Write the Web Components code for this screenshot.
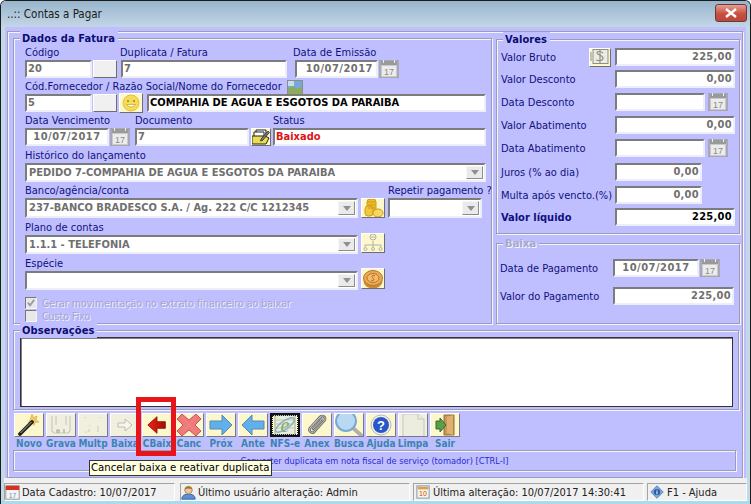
<!DOCTYPE html>
<html lang="pt-BR">
<head>
<meta charset="utf-8">
<title>Contas a Pagar</title>
<style>
  html, body { margin: 0; padding: 0; background: #fff; }
</style>
</head>
<body>
<cp-app></cp-app>
<script>
const CAL = `<svg viewBox="0 0 20 20" width="20" height="20"><rect x="1" y="1" width="18" height="18" fill="#c9c9c9" stroke="#8b8b8b"/><rect x="2" y="2" width="16" height="4" fill="#9a9a9a"/><rect x="4" y="1" width="1" height="3" fill="#eee"/><rect x="15" y="1" width="1" height="3" fill="#eee"/><rect x="3" y="7" width="14" height="10" fill="#ececec"/><text x="10" y="16" font-size="9" text-anchor="middle" fill="#8a8a8a" font-family="Liberation Sans">17</text></svg>`;

const ICONS = {
  cal: CAL,
  smile: `<svg viewBox="0 0 20 20" width="20" height="20"><circle cx="10" cy="10" r="8" fill="#f4dc5a" stroke="#e2c23a"/><circle cx="7" cy="8" r="1" fill="#a08020"/><circle cx="13" cy="8" r="1" fill="#a08020"/><path d="M5.5 11.5q4.500 5 9 0z" fill="#fff" stroke="#c8a020" stroke-width=".7"/></svg>`,
  pic: `<svg viewBox="0 0 16 15" width="16" height="15"><rect width="16" height="15" fill="#8c8c8c"/><rect x="1" y="1" width="14" height="13" fill="#78a8d8"/><rect x="1" y="1" width="6" height="5" fill="#c8dcec"/><path d="M1 14V9l5-3 4 3 5-2v7z" fill="#8cab5c"/></svg>`,
  docs: `<svg viewBox="0 0 20 18" width="20" height="18"><path d="M5 2h10v9H5z" fill="#fff" stroke="#222"/><path d="M3 4h10v9H3z" fill="#fff" stroke="#222"/><path d="M1 8h13l4 2-3 6H1z" fill="#e8dc50" stroke="#222"/><path d="M10 11l7-8 1.500 1.500-7 8-2 .5z" fill="#777" stroke="#111" stroke-width=".6"/></svg>`,
  coins: `<svg viewBox="0 0 22 22" width="22" height="22"><rect x="5" y="2" width="9" height="14" rx="3" fill="#eebc2c" stroke="#cd9a1a"/><rect x="3" y="9" width="8" height="10" rx="3" fill="#f2c838" stroke="#cd9a1a"/><ellipse cx="16" cy="16" rx="5" ry="4" fill="#f6d860" stroke="#cd9a1a"/><path d="M6 5h7M6 8h7M6 11h7" stroke="#cd9a1a"/></svg>`,
  org: `<svg viewBox="0 0 22 22" width="22" height="22" fill="none" stroke="#b0b0a8"><circle cx="11" cy="5" r="3"/><path d="M9 5h4M11 9v3M3 13h16M3 13v2M11 12v3M19 13v2"/><circle cx="3.500" cy="17" r="1.500"/><circle cx="11" cy="17" r="1.500"/><circle cx="18.500" cy="17" r="1.500"/></svg>`,
  coin: `<svg viewBox="0 0 22 22" width="22" height="22"><ellipse cx="11" cy="13" rx="9.500" ry="7.500" fill="#c98a30"/><ellipse cx="11" cy="10" rx="9.500" ry="7.500" fill="#eca854" stroke="#b87828"/><ellipse cx="11" cy="10" rx="6" ry="4.500" fill="#f2bc6c" stroke="#b87828"/><path d="M13 8c-2-1.500-4 0-2 2s0 3.500-2 2" stroke="#a06820" fill="none"/></svg>`,
  money: `<svg viewBox="0 0 22 18" width="22" height="18" fill="none" stroke="#8f8f88"><rect x="4" y="1.500" width="15" height="14" fill="#ecece2"/><path d="M14 5c-2-2-6-2-6 0s6 2 6 5-4 3-7 2M11 2v13" stroke-width="1.200"/><path d="M2 4v9" /></svg>`,
  novo: `<svg viewBox="0 0 24 24" width="24" height="24"><path d="M15 1l1.500 3.500L20 3l-1 4 3 2-4 .5-1 3-2-3-4 .5 2-3z" fill="#f0c868" stroke="#d8a848" stroke-width=".6"/><path d="M3 21L15 9" stroke="#222" stroke-width="3.800" stroke-linecap="round"/><path d="M3.500 20L14.500 9" stroke="#aaa" stroke-width="1"/></svg>`,
  grava: `<svg viewBox="0 0 26 24" width="26" height="24" fill="none" stroke="#c8c8c0" stroke-width="1.200"><path d="M4 3v15l2 2h14l2-2V3"/><path d="M8 3v9M18 3v9"/><path d="M9 20v-3h2v3M16 20v-4" stroke="#a8a8a0"/></svg>`,
  multp: `<svg viewBox="0 0 26 24" width="26" height="24" fill="none" stroke="#cfcfc8" stroke-width="1.200"><path d="M5 4v1M20 4v1M9 16v3M18 13v6M10 12v1M5 19h2"/></svg>`,
  baixa: `<svg viewBox="0 0 24 24" width="24" height="24"><path d="M5 10h7V6l7 6-7 6v-4H5z" fill="#f6f6ee" stroke="#bcbcb4"/></svg>`,
  cbaix: `<svg viewBox="0 0 24 24" width="20" height="20"><defs><linearGradient id="r" x1="0" x2="1"><stop offset="0" stop-color="#f02010"/><stop offset="1" stop-color="#a01008"/></linearGradient></defs><path d="M1 12L12 2v6h10v8H12v6z" fill="url(#r)" stroke="#8c1004"/></svg>`,
  canc: `<svg viewBox="0 0 26 24" width="26" height="24"><path d="M1 6l5-5 7 6 7-6 5 5-6 6 6 6-5 5-7-6-7 6-5-5 6-6z" fill="#ee7a7a" stroke="#c85858"/><path d="M6 4l14 16M20 4L6 20" stroke="#f4a0a0" stroke-dasharray="1 2"/></svg>`,
  prox: `<svg viewBox="0 0 26 24" width="26" height="24"><path d="M2 8h12V2l10 10-10 10v-6H2z" fill="#60b0ec" stroke="#5888b0"/></svg>`,
  ante: `<svg viewBox="0 0 26 24" width="26" height="24"><path d="M24 8H12V2L2 12l10 10v-6h12z" fill="#60b0ec" stroke="#5888b0"/></svg>`,
  nfse: `<svg viewBox="0 0 24 22" width="24" height="22"><rect x="2" y="1" width="20" height="20" fill="#e8ecdc" stroke="#98a890"/><path d="M3 6h18M3 10h18M3 14h18" stroke="#c0c8b0"/><ellipse cx="12" cy="11" rx="11" ry="4" transform="rotate(-35 12 11)" fill="none" stroke="#88b0c8" stroke-width="1.500"/><text x="12" y="18" font-size="20" font-style="italic" text-anchor="middle" fill="#80a870" font-family="Liberation Serif">e</text></svg>`,
  anex: `<svg viewBox="0 0 24 24" width="24" height="24" fill="none" stroke-linecap="round"><path d="M6 14L15 4c3-3 7 1 4 4l-10 11c-2 2-6-1-4-4l9-10c2-1 3 1 2 2l-8 9" stroke="#6e6e6e" stroke-width="2.600"/><path d="M6 14L15 4c3-3 7 1 4 4l-10 11c-2 2-6-1-4-4l9-10c2-1 3 1 2 2l-8 9" stroke="#c4c4c4" stroke-width="1"/></svg>`,
  busca: `<svg viewBox="0 0 30 28" width="30" height="28"><path d="M19 17l9 8" stroke="#b0b0b0" stroke-width="4" stroke-linecap="round"/><circle cx="12" cy="10" r="10" fill="#b8d8f4" stroke="#78a8d0" stroke-width="2"/></svg>`,
  ajuda: `<svg viewBox="0 0 24 24" width="24" height="24"><circle cx="12" cy="12" r="10" fill="#f0f0f0" stroke="#b8b8c0"/><circle cx="12" cy="12" r="8" fill="#2858c8"/><text x="12" y="16.500" font-size="13" font-weight="bold" text-anchor="middle" fill="#fff" font-family="Liberation Sans">?</text></svg>`,
  limpa: `<svg viewBox="0 0 26 26" width="26" height="26"><path d="M3 2h15v5h6v18H3z" fill="#ececdf" stroke="#c4c4bc"/><path d="M18 2l6 5" stroke="#d8d8d0"/></svg>`,
  sair: `<svg viewBox="0 0 24 24" width="24" height="24"><path d="M11 2h10v20H11z" fill="#c89858" stroke="#907038"/><path d="M14 4l6-2v20l-6-2z" fill="#e0b070"/><path d="M3 8h4V5l6 7-6 7v-3H3z" fill="#58a048" stroke="#386830"/></svg>`,
  stcal: `<svg viewBox="0 0 18 18" width="15" height="15"><rect x="1" y="1" width="16" height="16" fill="#f4f4f4" stroke="#888"/><rect x="1" y="1" width="16" height="5" fill="#d83020"/><text x="9" y="15" font-size="8" text-anchor="middle" fill="#7090b0" font-family="Liberation Sans">17</text></svg>`,
  stuser: `<svg viewBox="0 0 18 18" width="15" height="15"><path d="M1 17c0-5 4-6 8-6s8 1 8 6z" fill="#5b8fd8" stroke="#30589c"/><circle cx="9" cy="6" r="4.500" fill="#eec8a0" stroke="#a87840"/><path d="M4.500 5c1-4 8-4 9 0-3-1-6-1-9 0z" fill="#9c6c30"/></svg>`,
  stten: `<svg viewBox="0 0 16 16" width="14" height="14"><rect x="1" y="1" width="14" height="14" fill="#f8f4e0" stroke="#7090b0"/><rect x="2" y="2" width="12" height="3" fill="#d8a050"/><text x="8" y="13" font-size="8" text-anchor="middle" fill="#c05020" font-family="Liberation Sans">10</text></svg>`,
  stinfo: `<svg viewBox="0 0 18 18" width="14" height="14"><path d="M9 1l8 8-8 8-8-8z" fill="#7fa8d8" stroke="#4878b0"/><circle cx="9" cy="9" r="4" fill="#2858a8"/><path d="M9 6v1M9 8v4" stroke="#fff" stroke-width="1.400"/></svg>`
};

class CpIcon extends HTMLElement {
  constructor() { super(); this.attachShadow({mode: "open"}); }
  connectedCallback() {
    this.shadowRoot.innerHTML = `<style>:host{display:inline-flex;align-items:center;justify-content:center;line-height:0;flex:none}</style>${ICONS[this.getAttribute("name")] || ""}`;
  }
}

// sunken edit box, the delphi kind
class CpInput extends HTMLElement {
  constructor() { super(); this.attachShadow({mode: "open"}); }
  connectedCallback() {
    const tone = this.getAttribute("tone") || "off";
    const colors = {off: "#6f6f6f", on: "#000", red: "#dc1414"};
    this.shadowRoot.innerHTML = `
    <style>
      :host { display:block; box-sizing:border-box; height:18px; flex:none;
        background:#fff; border:2px solid; border-color:#7c7c7c #eeeef8 #eeeef8 #7c7c7c;
        font:bold 11px "DejaVu Sans Condensed","DejaVu Sans",sans-serif;
        color:${colors[tone]}; line-height:14px; padding:0 1px; white-space:nowrap; overflow:hidden; }
      :host([right]) { text-align:right; letter-spacing:.3px; }
      :host([center]) { text-align:center; letter-spacing:.5px; }
    </style><slot></slot>`;
  }
}

class CpSelect extends HTMLElement {
  constructor() { super(); this.attachShadow({mode: "open"}); }
  connectedCallback() {
    this.shadowRoot.innerHTML = `
    <style>
      :host { display:flex; box-sizing:border-box; height:20px; flex:none; align-items:stretch;
        background:#fff; border:2px solid; border-color:#7c7c7c #eeeef8 #eeeef8 #7c7c7c;
        font:bold 11px "DejaVu Sans Condensed","DejaVu Sans",sans-serif; color:#6f6f6f; }
      .v { flex:1; padding:1px 2px; line-height:14px; white-space:nowrap; overflow:hidden; }
      .b { width:15px; margin:1px; background:#eaeaea; border:1px solid; border-color:#f6f6f6 #8c8c8c #8c8c8c #f6f6f6;
        display:flex; align-items:center; justify-content:center; }
      .b::after { content:""; border:4px solid transparent; border-top:5px solid #909090; border-bottom:0; }
    </style><div class="v"><slot></slot></div><div class="b"></div>`;
  }
}

class CpIbtn extends HTMLElement {
  constructor() { super(); this.attachShadow({mode: "open"}); }
  connectedCallback() {
    const name = this.getAttribute("icon");
    this.shadowRoot.innerHTML = `
    <style>
      :host { display:flex; box-sizing:border-box; width:24px; height:18px; flex:none; align-items:center; justify-content:center;
        overflow:hidden; background:#f0f0f0; border:1px solid; border-color:#fff #6e6e6e #6e6e6e #fff; }
      :host([cream]) { background:#fdf8cc; }
      :host([flat]) { border:0; background:none; width:20px; }
    </style>${name ? `<cp-icon name="${name}"></cp-icon>` : ""}`;
  }
}

class CpField extends HTMLElement {
  constructor() { super(); this.attachShadow({mode: "open"}); }
  connectedCallback() {
    this.shadowRoot.innerHTML = `
    <style>
      :host { display:block; flex:none; }
      .l { height:14px; line-height:14px; white-space:nowrap; display:flex; align-items:center; }
      .c { display:flex; align-items:flex-start; gap:1px; }
    </style><div class="l">${this.getAttribute("label")}<slot name="tag"></slot></div><div class="c"><slot></slot></div>`;
  }
}

class CpGroup extends HTMLElement {
  constructor() { super(); this.attachShadow({mode: "open"}); }
  connectedCallback() {
    this.shadowRoot.innerHTML = `
    <style>
      :host { display:block; position:relative; box-sizing:border-box; border:1px solid #9c9cb4;
        box-shadow:inset 1px 1px 0 #f4f4ff, 1px 1px 0 #f4f4ff; }
      .leg { position:absolute; left:6px; top:-8px; padding:0 3px 0 2px; background:#bfbfff; line-height:15px;
        font-weight:bold; font-size:11px; letter-spacing:.1px; color:#0c0c70; }
      :host([off]) .leg { color:#a8a8c8; text-shadow:1px 1px 0 #f4f4ff; }
    </style><div class="leg">${this.getAttribute("legend")}</div><slot></slot>`;
  }
}

class CpCheck extends HTMLElement {
  constructor() { super(); this.attachShadow({mode: "open"}); }
  connectedCallback() {
    const on = this.hasAttribute("on");
    this.shadowRoot.innerHTML = `
    <style>
      :host { display:flex; align-items:center; gap:5px; height:13px; font-size:10.500px; color:#a6a6cc; text-shadow:1px 1px 0 #eeeeff; white-space:nowrap; }
      i { display:block; box-sizing:border-box; width:12px; height:12px; background:#e8e8e8; border:1px solid; border-color:#777 #f4f4f4 #f4f4f4 #777; }
      svg { display:block; }
    </style><i>${on ? `<svg viewBox="0 0 11 11" width="10" height="10"><path d="M2 5l2.500 3L9 2" fill="none" stroke="#9a9a9a" stroke-width="2"/></svg>` : ""}</i><slot></slot>`;
  }
}

class CpTool extends HTMLElement {
  constructor() { super(); this.attachShadow({mode: "open"}); }
  connectedCallback() {
    this.shadowRoot.innerHTML = `
    <style>
      :host { display:flex; flex-direction:column; align-items:center; width:30px; flex:none; }
      .b { box-sizing:border-box; width:30px; height:24px; display:flex; align-items:center; justify-content:center; overflow:hidden;
        background:#fdf8cc; border:1px solid; border-color:#fff #77778c #77778c #fff; }
      :host([off]) .b { background:#f1f0de; }
      :host([focus]) .b { border:2px solid #111; outline:1px dotted #222; outline-offset:-3px; }
      .t { margin-top:1px; height:12px; white-space:nowrap; font:bold 10px/12px "DejaVu Sans Condensed","DejaVu Sans",sans-serif; color:#3a84b0; }
    </style><div class="b"><cp-icon name="${this.getAttribute("icon")}"></cp-icon></div><div class="t">${this.getAttribute("label")}</div>`;
  }
}

class CpStat extends HTMLElement {
  constructor() { super(); this.attachShadow({mode: "open"}); }
  connectedCallback() {
    this.shadowRoot.innerHTML = `
    <style>
      :host { display:flex; box-sizing:border-box; align-items:center; gap:2px; height:18px; flex:none;
        border:1px solid; border-color:#a4a4a4 #fff #fff #a4a4a4; white-space:nowrap; overflow:hidden; }
    </style><cp-icon name="${this.getAttribute("icon")}"></cp-icon><slot></slot>`;
  }
}

class CpTip extends HTMLElement {
  constructor() { super(); this.attachShadow({mode: "open"}); }
  connectedCallback() {
    this.shadowRoot.innerHTML = `
    <style>
      :host { position:absolute; left:89px; top:460px; box-sizing:border-box; width:183px; height:16px; background:#ffffe1; border:1px solid #333;
        color:#000; font-size:11.300px; line-height:14px; padding-left:1px; white-space:nowrap; overflow:hidden; }
    </style><slot></slot>`;
  }
}

class CpApp extends HTMLElement {
  constructor() { super(); this.attachShadow({mode: "open"}); }
  connectedCallback() {
    const row = (r, s) => `<div class="vrow" style="${s || ""}">${r}</div>`;
    this.shadowRoot.innerHTML = `
    <style>
      :host { display:block; position:relative; width:751px; height:504px; overflow:hidden; background:#fff;
        font:11px "DejaVu Sans Condensed","DejaVu Sans",sans-serif; color:#10107c; }
      .win { box-sizing:border-box; width:751px; height:504px; display:flex; flex-direction:column; overflow:hidden;
        background:#c2d9ea; border:1px solid #1c1c1c; border-bottom:0; border-radius:6px 6px 0 0; }
      .title { height:26px; flex:none; display:flex; align-items:center; justify-content:space-between; padding:0 3px 0 6px;
        background:linear-gradient(#98b5cc,#c3d6e6); color:#1a1a1a; font-size:11.500px; }
      .close { box-sizing:border-box; width:32px; height:18px; margin-top:-3px; border:1px solid #6c3a3a; border-radius:3px;
        background:linear-gradient(#e4a094,#c8503f 55%,#b8483c); display:flex; align-items:center; justify-content:center; }
      .client { flex:none; height:451px; margin:0 4px; background:#bfbfff; padding:4px 3px 0 2px; box-sizing:border-box; display:flex; }
      .panel { flex:1; box-sizing:border-box; height:447px; border:1px solid #9c9cb4; box-shadow:inset 1px 1px 0 #f4f4ff, 1px 1px 0 #f4f4ff;
        padding:6px 2px 0 5px; }
      .top { display:flex; gap:4px; height:286px; }
      .left { width:479px; height:286px; box-sizing:border-box; padding:7px 0 0 11px; flex:none; }
      .right { width:244px; display:flex; flex-direction:column; gap:9px; padding-top:1px; box-sizing:border-box; }
      .val { height:195px; box-sizing:border-box; padding:8px 0 0 4px; display:flex; flex-direction:column; gap:5px; }
      .bx { height:81px; box-sizing:border-box; padding:15px 0 0 3px; display:flex; flex-direction:column; gap:10px; }
      .vrow { display:flex; align-items:center; height:18px; gap:1px; }
      .vrow > span { flex:none; white-space:nowrap; width:113px; }
      .bx .vrow > span { width:112px; }
      .row { display:flex; align-items:flex-start; }
      .obs { margin-top:6px; height:80px; width:726px; box-sizing:border-box; padding:6px 0 0 6px; }
      .memo { box-sizing:border-box; width:713px; height:70px; background:#fff; border:1px solid #333; box-shadow:inset 1px 1px 0 #808080; }
      .tools { display:flex; gap:2px; margin:3px 0 0 1px; }
      .hint { box-sizing:border-box; width:723px; height:21px; border:1px solid #9c9cb4; box-shadow:inset 1px 1px 0 #f4f4ff, 1px 1px 0 #f4f4ff;
        display:flex; align-items:center; justify-content:center; color:#2a2acc; font-size:9.200px; }
      .status { flex:1; margin:0 3px; background:#f0f0f0; display:flex; gap:3px; align-items:flex-start; padding-top:5px; color:#222; }
      .strip { height:3px; flex:none; background:#a8dcec; }
      .mark { position:absolute; left:136px; top:397px; box-sizing:border-box; width:40px; height:59px; border:5px solid #e8141c; }
    </style>
    <div class="win">
      <div class="title"><span>..:: Contas a Pagar</span>
        <div class="close"><svg viewBox="0 0 12 10" width="12" height="10"><path d="M1 1l10 8M11 1L1 9" stroke="#fff" stroke-width="2.400"/></svg></div>
      </div>
      <div class="client"><div class="panel">
        <div class="top">
          <cp-group class="left" legend="Dados da Fatura">
            <div class="row">
              <cp-field label="Código"><cp-input style="width:67px">20</cp-input><cp-ibtn></cp-ibtn></cp-field>
              <cp-field label="Duplicata / Fatura" style="margin-left:3px"><cp-input style="width:166px;margin-left:1px">7</cp-input></cp-field>
              <cp-field label="Data de Emissão" style="margin-left:6px"><cp-input right style="width:83px;margin-left:2px;letter-spacing:.5px;padding-right:3px">10/07/2017</cp-input><cp-ibtn flat icon="cal"></cp-ibtn></cp-field>
            </div>
            <div class="row" style="margin-top:2px">
              <cp-field label="Cód.Fornecedor / Razão Social/Nome do Fornecedor"><cp-icon slot="tag" name="pic" style="margin-left:5px"></cp-icon><cp-input style="width:67px">5</cp-input><cp-ibtn></cp-ibtn><cp-ibtn cream icon="smile" style="margin:-1px 0 0 1px;height:20px"></cp-ibtn><cp-input tone="on" style="width:339px;margin-left:3px">COMPAHIA DE AGUA E ESGOTOS DA PARAIBA</cp-input></cp-field>
            </div>
            <div class="row" style="margin-top:1px">
              <cp-field label="Data Vencimento"><cp-input center style="width:84px">10/07/2017</cp-input><cp-ibtn flat icon="cal"></cp-ibtn></cp-field>
              <cp-field label="Documento" style="margin-left:5px"><cp-input style="width:114px">7</cp-input><cp-ibtn cream icon="docs" style="width:20px;margin-left:1px"></cp-ibtn></cp-field>
              <cp-field label="Status" style="margin-left:2px"><cp-input tone="red" style="width:213px">Baixado</cp-input></cp-field>
            </div>
            <cp-field label="Histórico do lançamento" style="margin-top:3px"><cp-select style="width:461px;height:19px">PEDIDO 7-COMPAHIA DE AGUA E ESGOTOS DA PARAIBA</cp-select></cp-field>
            <div class="row" style="margin-top:2px">
              <cp-field label="Banco/agência/conta"><cp-select style="width:333px">237-BANCO BRADESCO S.A. / Ag. 222 C/C 1212345</cp-select><cp-ibtn cream icon="coins" style="width:24px;height:20px;margin-left:2px"></cp-ibtn></cp-field>
              <cp-field label="Repetir pagamento ?" style="margin-left:3px"><cp-select style="width:94px"></cp-select></cp-field>
            </div>
            <cp-field label="Plano de contas" style="margin-top:3px"><cp-select style="width:333px;height:19px">1.1.1 - TELEFONIA</cp-select><cp-ibtn cream icon="org" style="width:24px;height:20px;margin:-2px 0 0 2px"></cp-ibtn></cp-field>
            <cp-field label="Espécie" style="margin-top:3px"><cp-select style="width:333px;height:19px">&nbsp;</cp-select><cp-ibtn cream icon="coin" style="width:24px;height:21px;margin:-3px 0 0 2px"></cp-ibtn></cp-field>
            <cp-check on style="margin-top:6px">Gerar movimentação no extrato financeiro ao baixar</cp-check>
            <cp-check>Custo Fixo</cp-check>
          </cp-group>
          <div class="right">
            <cp-group class="val" legend="Valores">
              <div class="vrow"><span style="width:87px">Valor Bruto</span><cp-ibtn cream icon="money" style="width:22px;height:19px;margin-right:3px"></cp-ibtn><cp-input right style="width:120px">225,00</cp-input></div>
              ${row(`<span>Valor Desconto</span><cp-input right style="width:120px">0,00</cp-input>`, "margin-top:-1px")}
              ${row(`<span>Data Desconto</span><cp-input style="width:90px"></cp-input><cp-ibtn flat icon="cal" style="margin-left:2px"></cp-ibtn>`)}
              ${row(`<span>Valor Abatimento</span><cp-input right style="width:120px">0,00</cp-input>`)}
              ${row(`<span>Data Abatimento</span><cp-input style="width:90px"></cp-input><cp-ibtn flat icon="cal" style="margin-left:2px"></cp-ibtn>`)}
              ${row(`<span>Juros (% ao dia)</span><cp-input right style="width:87px">0,00</cp-input>`, "margin-top:1px")}
              ${row(`<span>Multa após vencto.(%)</span><cp-input right style="width:87px">0,00</cp-input>`)}
              ${row(`<span><b>Valor líquido</b></span><cp-input right tone="on" style="width:120px">225,00</cp-input>`, "margin-top:-1px")}
            </cp-group>
            <cp-group class="bx" off legend="Baixa">
              ${row(`<span>Data de Pagamento</span><cp-input center style="width:86px">10/07/2017</cp-input><cp-ibtn flat icon="cal"></cp-ibtn>`)}
              ${row(`<span>Valor do Pagamento</span><cp-input right style="width:121px">225,00</cp-input>`)}
            </cp-group>
          </div>
        </div>
        <cp-group class="obs" legend="Observações"><div class="memo"></div></cp-group>
        <div class="tools">
          <cp-tool icon="novo" label="Novo"></cp-tool>
          <cp-tool off icon="grava" label="Grava"></cp-tool>
          <cp-tool off icon="multp" label="Multp"></cp-tool>
          <cp-tool off icon="baixa" label="Baixa"></cp-tool>
          <cp-tool icon="cbaix" label="CBaix"></cp-tool>
          <cp-tool icon="canc" label="Canc"></cp-tool>
          <cp-tool icon="prox" label="Próx"></cp-tool>
          <cp-tool icon="ante" label="Ante"></cp-tool>
          <cp-tool focus icon="nfse" label="NFS-e"></cp-tool>
          <cp-tool icon="anex" label="Anex"></cp-tool>
          <cp-tool icon="busca" label="Busca"></cp-tool>
          <cp-tool icon="ajuda" label="Ajuda"></cp-tool>
          <cp-tool off icon="limpa" label="Limpa"></cp-tool>
          <cp-tool icon="sair" label="Sair"></cp-tool>
        </div>
        <div class="hint">Converter duplicata em nota fiscal de serviço (tomador) [CTRL-I]</div>
      </div></div>
      <div class="status">
        <cp-stat icon="stcal" style="width:171px">Data Cadastro: 10/07/2017</cp-stat>
        <cp-stat icon="stuser" style="width:230px;margin-left:2px">Último usuário alteração: Admin</cp-stat>
        <cp-stat icon="stten" style="width:231px;padding-left:2px;gap:3px">Última alteração: 10/07/2017 14:30:41</cp-stat>
        <cp-stat icon="stinfo" style="flex:1;padding-left:2px;gap:3px">F1 - Ajuda</cp-stat>
      </div>
      <div class="strip"></div>
    </div>
    <cp-tip>Cancelar baixa e reativar duplicata</cp-tip>
    <div class="mark"></div>`;
  }
}

customElements.define("cp-icon", CpIcon);
customElements.define("cp-input", CpInput);
customElements.define("cp-select", CpSelect);
customElements.define("cp-ibtn", CpIbtn);
customElements.define("cp-field", CpField);
customElements.define("cp-group", CpGroup);
customElements.define("cp-check", CpCheck);
customElements.define("cp-tool", CpTool);
customElements.define("cp-stat", CpStat);
customElements.define("cp-tip", CpTip);
customElements.define("cp-app", CpApp);
</script>
</body>
</html>
